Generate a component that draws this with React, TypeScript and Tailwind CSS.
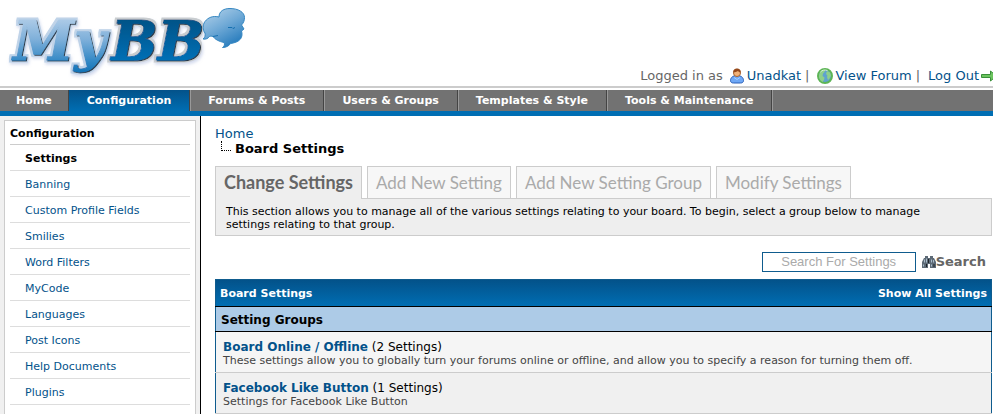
import React from 'react';

interface SettingGroup {
  title: string;
  count: number;
  description: string;
}

const menuItems = ['Home', 'Configuration', 'Forums & Posts', 'Users & Groups', 'Templates & Style', 'Tools & Maintenance'];

const sideItems = [
  'Settings',
  'Banning',
  'Custom Profile Fields',
  'Smilies',
  'Word Filters',
  'MyCode',
  'Languages',
  'Post Icons',
  'Help Documents',
  'Plugins',
  'Attachment Types',
];

const tabs = ['Change Settings', 'Add New Setting', 'Add New Setting Group', 'Modify Settings'];

const groups: SettingGroup[] = [
  {
    title: 'Board Online / Offline',
    count: 2,
    description: 'These settings allow you to globally turn your forums online or offline, and allow you to specify a reason for turning them off.',
  },
  {
    title: 'Facebook Like Button',
    count: 1,
    description: 'Settings for Facebook Like Button',
  },
];

const Logo: React.FC = () => (
  <svg width="250" height="86" viewBox="0 0 250 86" className="shrink-0" role="img" aria-label="MyBB">
    <defs>
      <linearGradient id="my" gradientUnits="userSpaceOnUse" x1="0" y1="16" x2="0" y2="74">
        <stop offset="0" stopColor="#b4cfe9" />
        <stop offset="0.4" stopColor="#7fb0da" />
        <stop offset="0.8" stopColor="#2f86c4" />
        <stop offset="1" stopColor="#0f70b4" />
      </linearGradient>
      <linearGradient id="bb" gradientUnits="userSpaceOnUse" x1="0" y1="16" x2="0" y2="60">
        <stop offset="0" stopColor="#045083" />
        <stop offset="1" stopColor="#006fb5" />
      </linearGradient>
      <linearGradient id="bubble" x1="0.1" y1="0" x2="0.7" y2="1">
        <stop offset="0" stopColor="#b4d2ea" />
        <stop offset="0.5" stopColor="#6fa9d6" />
        <stop offset="1" stopColor="#2379bb" />
      </linearGradient>
      {/* dark edge under the letters, pale rim around them, soft shadow below */}
      <filter id="bevelMy" x="-10%" y="-10%" width="125%" height="130%">
        <feOffset in="SourceAlpha" dx="1" dy="1" result="edge" />
        <feFlood floodColor="#253848" />
        <feComposite in2="edge" operator="in" result="dark" />
        <feMorphology in="SourceAlpha" operator="dilate" radius="2" />
        <feGaussianBlur stdDeviation="0.5" result="wide" />
        <feFlood floodColor="#bfd3e8" />
        <feComposite in2="wide" operator="in" result="rim" />
        <feDropShadow in="rim" dx="1" dy="2" stdDeviation="1.5" floodColor="#a9b8de" floodOpacity="0.5" result="base" />
        <feMerge>
          <feMergeNode in="base" />
          <feMergeNode in="dark" />
          <feMergeNode in="SourceGraphic" />
        </feMerge>
      </filter>
      <filter id="bevelBb" x="-10%" y="-10%" width="125%" height="130%">
        <feOffset in="SourceAlpha" dx="1" dy="1" result="edge" />
        <feFlood floodColor="#253848" />
        <feComposite in2="edge" operator="in" result="dark" />
        <feMorphology in="SourceAlpha" operator="dilate" radius="2" />
        <feGaussianBlur stdDeviation="0.5" result="wide" />
        <feFlood floodColor="#c8cccf" />
        <feComposite in2="wide" operator="in" result="rim" />
        <feDropShadow in="rim" dx="1" dy="2" stdDeviation="1.5" floodColor="#a9b8de" floodOpacity="0.5" result="base" />
        <feMerge>
          <feMergeNode in="base" />
          <feMergeNode in="dark" />
          <feMergeNode in="SourceGraphic" />
        </feMerge>
      </filter>
    </defs>
    <g fontFamily="'DejaVu Serif', serif" fontWeight="bold" fontStyle="italic" fontSize="55" strokeWidth="1">
      <text x="13" y="60" fill="url(#my)" stroke="url(#my)" filter="url(#bevelMy)">My</text>
      <text x="111" y="60" fill="url(#bb)" stroke="url(#bb)" filter="url(#bevelBb)">BB</text>
    </g>
    <path
      d="M219 17C219 11 224 8.500 230 8.500C238 8.500 244.500 12 244.500 17.500C244.500 20.500 243.500 23 241.500 25L244 29L241.500 31C242.500 34 242 37 240.500 39C238 42 234 43 230.500 43.500C229 46 226 47.500 222.500 47.500C224.500 46 225 44.500 224 42.500C219 41.500 215 39.500 213 36.500C211.500 36 210.500 36 209.500 36.500C208 38.500 206 39.500 203 39C205 37.500 205.500 35.500 205 33C202.500 30 202.500 25 205 21.500C208 17.500 213 15.500 219 17z"
      fill="url(#bubble)"
      stroke="#3587c2"
      strokeLinejoin="round"
    />
    <path d="M213 36.500l5-1M228 27.500h4l1 1 2-1" fill="none" stroke="#1670b0" />
  </svg>
);

const UserIcon: React.FC = () => (
  <svg width="16" height="16" viewBox="0 0 16 16" aria-hidden="true">
    <path d="M1.500 12.500C1.500 9.500 4 7.500 8 7.500s6.500 2 6.500 5c0 2-1.500 2.500-3 2.500H4.500C3 15 1.500 14.500 1.500 12.500z" fill="#6fa8f5" stroke="#2b5fb8" />
    <path d="M5 9.500l3 2 3-2" fill="none" stroke="#a9d0ff" />
    <circle cx="8" cy="5" r="3.500" fill="#f3b277" stroke="#a8632f" />
    <path d="M4.300 4.500C4 1.500 6 .5 8 .5s4 1 3.700 4C10.500 4.500 9.500 3.500 9 3 8 4 5.500 4 4.300 4.500z" fill="#96491a" />
  </svg>
);

const GlobeIcon: React.FC = () => (
  <svg width="16" height="16" viewBox="0 0 16 16" aria-hidden="true">
    <circle cx="8" cy="8" r="7" fill="#5fa3cf" stroke="#5db556" strokeWidth="2" />
    <path d="M3 4c1.500-2 4-2.500 5-2l-.5 2L6 5.500 5.500 8l2 1.500L7 12l-1.500 2C3 12.500 1.500 10 2 7z" fill="#8fd089" />
    <path d="M10 3l3 1.500 1 3-1.500 3L11 12l-1-3 .5-1.500L9 6z" fill="#8fd089" />
    <path d="M3.500 4c1.500-2 4.500-2.500 7-1.500" fill="none" stroke="#d9f3d6" />
  </svg>
);

const LogoutIcon: React.FC = () => (
  <svg width="16" height="16" viewBox="0 0 16 16" className="-mr-1 shrink-0" aria-hidden="true">
    <path d="M.5 6.500h9v-3.500l6 5-6 5V9.500h-9z" fill="#6cc55f" stroke="#3a8f3a" />
  </svg>
);

const BinocularsIcon: React.FC = () => (
  <svg width="14" height="14" viewBox="0 0 14 14" aria-hidden="true">
    <path d="M3 1h3v2h2V1h3v2h1l2 4v6H8V9H6v4H0V7l2-4h1z" fill="#5d6a76" />
    <path d="M2.500 4.500v3M1.500 9.500v2M4.500 3.500v4M9.500 4.500v3M9.500 9.500v2M11.500 5v2.500" stroke="#a9bccb" />
    <path d="M6.500 4v4M4.500 9v3M12 9v3" stroke="#1d2329" />
  </svg>
);

const Header: React.FC = () => (
  <header className="flex h-[88px] shrink-0 justify-between overflow-hidden whitespace-nowrap border-b-2 border-[#ccc]">
    <Logo />
    <div className="flex items-end text-[13px] leading-5 text-[#666]">
      <span className="mr-1.5">Logged in as</span>
      <a href="#" className="flex items-center gap-0.5 text-[#03528a]">
        <UserIcon />
        Unadkat
      </a>
      <span className="ml-1 mr-2">|</span>
      <a href="#" className="flex items-center gap-0.5 text-[#03528a]">
        <GlobeIcon />
        View Forum
      </a>
      <span className="ml-1 mr-2">|</span>
      <a href="#" className="flex items-center gap-0.5 text-[#03528a]">
        Log Out
        <LogoutIcon />
      </a>
    </div>
  </header>
);

const Menu: React.FC = () => (
  <nav className="mt-0.5 flex h-[26px] shrink-0 border-b-[5px] border-[#006eb3] bg-[#727272] text-[11px] font-bold text-white">
    {menuItems.map(item => (
      <a
        key={item}
        href="#"
        className={`flex items-center whitespace-nowrap border-r border-[#444] pt-0.5 shadow-[1px_0_0_#999] ${item === 'Home' ? 'px-4' : 'px-[18px]'} ${
          item === 'Configuration' ? 'bg-linear-to-b from-[#03528a] to-[#006eb3]' : ''
        }`}
      >
        {item}
      </a>
    ))}
  </nav>
);

const Sidebar: React.FC = () => (
  <aside className="w-[201px] shrink-0 border-r border-black bg-[#f0f0f0] p-1">
    <div className="border border-[#ccc] bg-white px-[5px] text-[11px]">
      <h2 className="border-b border-[#ccc] pb-0.5 pt-[5px] font-bold leading-4">Configuration</h2>
      <ul>
        {sideItems.map(item => (
          <li key={item} className="flex h-[26px] items-center border-b border-[#ddd] pl-[15px] pt-[3px]">
            <a href="#" className={item === 'Settings' ? 'font-bold text-black' : 'text-[#03528a]'}>
              {item}
            </a>
          </li>
        ))}
      </ul>
    </div>
  </aside>
);

const Tabs: React.FC = () => (
  <div className="mt-2.5">
    <div className="flex gap-[5px]">
      {tabs.map((tab, i) => (
        <a
          key={tab}
          href="#"
          className={`whitespace-nowrap border border-b-0 border-[#ccc] px-2 font-['Lato',sans-serif] leading-[31px] ${
            i === 0 ? '-mb-px bg-[#eee] pb-px text-[18px] font-bold text-[#666]' : 'bg-[#f7f7f7] text-[17px] text-[#aaa]'
          }`}
        >
          {tab}
        </a>
      ))}
    </div>
    <p className="border border-[#ccc] bg-[#eee] pb-1 pl-2.5 pr-10 pt-1.5 text-[11px] leading-[13px]">
      This section allows you to manage all of the various settings relating to your board. To begin, select a group below to manage settings relating to that group.
    </p>
  </div>
);

const SearchForm: React.FC = () => (
  <form className="mb-[7px] mt-4 flex items-center justify-end gap-1.5 pr-1.5 leading-5">
    <input
      type="text"
      aria-label="Search For Settings"
      placeholder="Search For Settings"
      className="h-5 w-[154px] border border-[#0f5c8e] text-center font-['Liberation_Sans',Arial,sans-serif] text-[13px] placeholder:text-[#aaa]"
    />
    <button type="submit" className="flex h-5 items-center text-[13px] font-bold text-[#666]">
      <BinocularsIcon />
      Search
    </button>
  </form>
);

const SettingsTable: React.FC = () => (
  <table className="w-full border-collapse border border-[#0f5c8e] text-left">
    <thead>
      <tr className="border-b border-black bg-linear-to-b from-[#03528a] to-[#006eb3] text-[11px] text-white">
        <th className="h-[27px] px-1 pt-0.5">
          <div className="flex justify-between">
            <span>Board Settings</span>
            <a href="#">Show All Settings</a>
          </div>
        </th>
      </tr>
      <tr className="border-b border-black bg-[#adcbe7] text-[12px]">
        <th className="h-[25px] px-[5px] pt-0.5">Setting Groups</th>
      </tr>
    </thead>
    <tbody>
      {groups.map(group => (
        <tr key={group.title} className="border-b border-[#ccc] odd:bg-[#f5f5f5] even:bg-[#f0f0f0]">
          <td className="h-[41px] px-[7px] pt-0.5">
            <div className="text-[12px] leading-[14px]">
              <a href="#" className="font-bold text-[#03528a]">
                {group.title}
              </a>{' '}
              ({group.count} Settings)
            </div>
            <div className="text-[11px] leading-[13px] text-[#444]">{group.description}</div>
          </td>
        </tr>
      ))}
    </tbody>
  </table>
);

const App: React.FC = () => (
  <div className="flex h-screen flex-col overflow-hidden bg-white font-[Verdana,'DejaVu_Sans',sans-serif] text-black">
    <Header />
    <Menu />
    <div className="flex flex-1">
      <Sidebar />
      <main className="min-w-0 flex-1 pl-3.5 pr-px pt-2.5">
        <div className="text-[13px] leading-[15px]">
          <a href="#" className="text-[#03528a]">
            Home
          </a>
          <div className="flex pl-1.5">
            <span className="mr-1 h-2.5 w-2.5 border-b border-l border-dotted border-black" />
            <span className="font-bold">Board Settings</span>
          </div>
        </div>
        <Tabs />
        <SearchForm />
        <SettingsTable />
      </main>
    </div>
  </div>
);

export default App;
